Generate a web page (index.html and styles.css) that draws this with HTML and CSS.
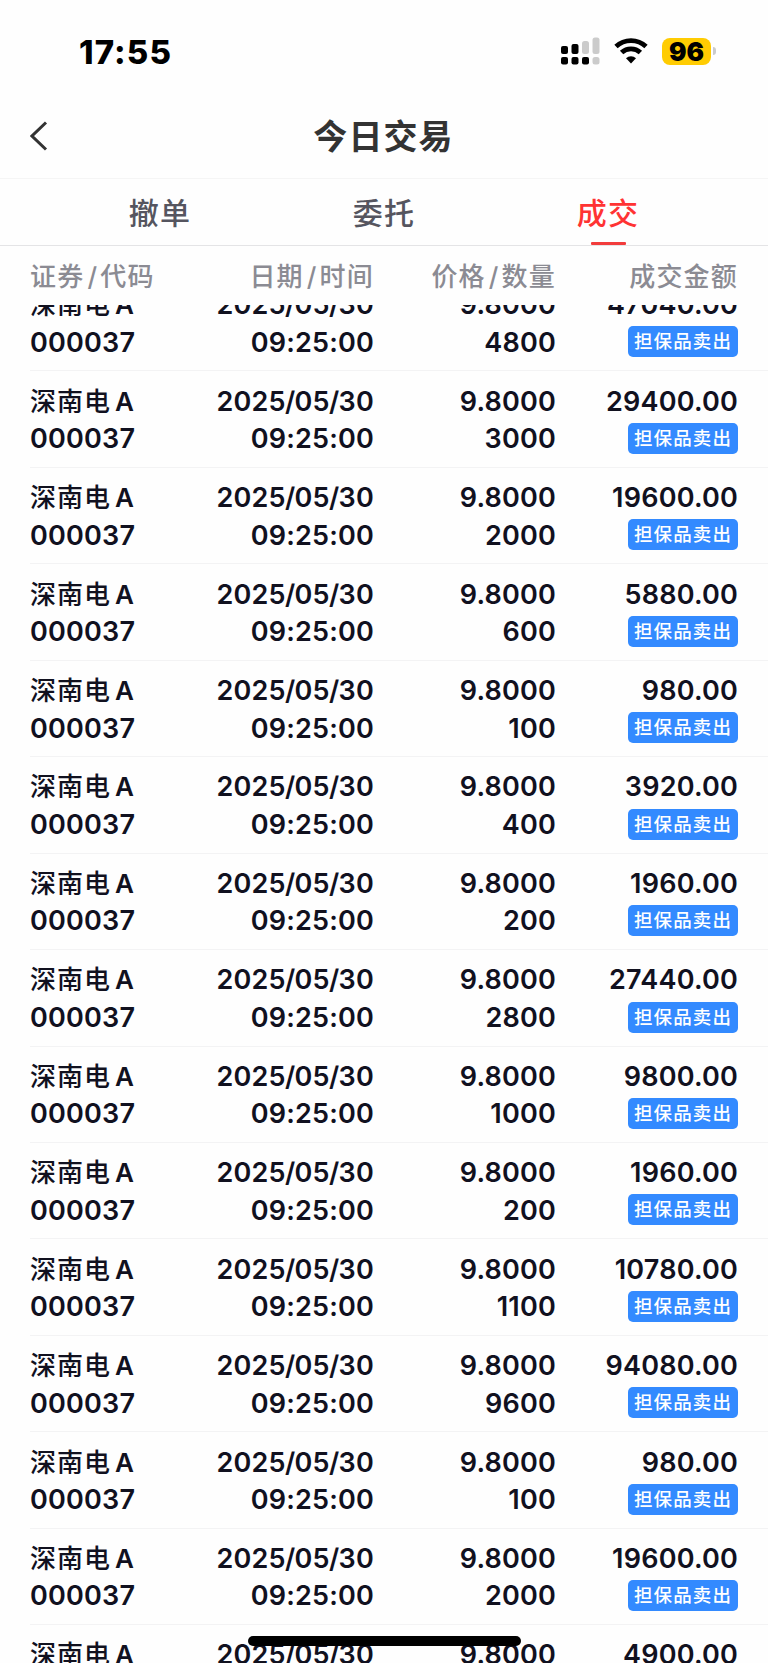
FILE: index.html
```html
<!DOCTYPE html>
<html lang="zh-CN">
    <head>
        <meta charset="UTF-8">
        <title>今日交易</title>
        <link rel="stylesheet" href="styles.css">
    </head>
    <body>
        <div class="page">
            <div class="status">
                <span class="time">17:55</span>
                <div class="status-icons">
                    <svg class="signal" width="39" height="28" viewBox="0 0 39 28">
                        <rect x="0" y="9" width="7" height="8" rx="2"/>
                        <rect x="10.5" y="7" width="7" height="10" rx="2"/>
                        <rect class="off" x="21" y="4" width="7" height="13" rx="2.5"/>
                        <rect class="off" x="31.5" y="0.5" width="7" height="16.5" rx="2.5"/>
                        <rect x="0" y="20" width="7" height="7.5" rx="2"/>
                        <rect x="10.5" y="20" width="7" height="7.5" rx="2"/>
                        <rect x="21" y="20" width="7" height="7.5" rx="2"/>
                        <rect class="off" x="31.5" y="20" width="7" height="7.5" rx="2.5"/>
                    </svg>
                    <svg class="wifi" width="34" height="26" viewBox="0 0 34 26">
                        <path class="arc" d="M2 8.6a21.8 21.8 0 0 1 30 0"/>
                        <path class="arc" d="M7.6 14.6a13.6 13.6 0 0 1 18.8 0"/>
                        <path d="M17 25.4l-5-5.1a7.4 7.4 0 0 1 10 0z"/>
                    </svg>
                    <div class="battery">96</div>
                    <div class="battery-cap"></div>
                </div>
            </div>
            <div class="header">
                <svg class="back" width="18" height="30" viewBox="0 0 18 30">
                    <path d="M16 1.5L2 15l14 13.5"/>
                </svg>
                <h1 class="title">今日交易</h1>
            </div>
            <ul class="tab">
                <li>撤单</li>
                <li>委托</li>
                <li class="selected">成交</li>
            </ul>
            <div class="cols thead">
                <span>证券<i>/</i>代码</span>
                <span>日期<i>/</i>时间</span>
                <span>价格<i>/</i>数量</span>
                <span>成交金额</span>
            </div>
            <div class="list">
                <div class="rows" id="rows"></div>
            </div>
            <div class="home-bar"></div>
        </div>
        <script>
            var aData = [
                ['4800', '47040.00'],
                ['3000', '29400.00'],
                ['2000', '19600.00'],
                ['600', '5880.00'],
                ['100', '980.00'],
                ['400', '3920.00'],
                ['200', '1960.00'],
                ['2800', '27440.00'],
                ['1000', '9800.00'],
                ['200', '1960.00'],
                ['1100', '10780.00'],
                ['9600', '94080.00'],
                ['100', '980.00'],
                ['2000', '19600.00'],
                ['500', '4900.00']
            ];
            var html = '';
            for(var i=0;i<aData.length;i++){
                html += '<div class="cols row">' +
                    '<div><p class="name">深南电<span class="share">A</span></p><p>000037</p></div>' +
                    '<div><p>2025<i>/</i>05<i>/</i>30</p><p>09:25:00</p></div>' +
                    '<div><p>9.8000</p><p>' + aData[i][0] + '</p></div>' +
                    '<div><p>' + aData[i][1] + '</p><p class="tag-line"><span class="tag">担保品卖出</span></p></div>' +
                    '</div>';
            }
            document.getElementById('rows').innerHTML = html;
        </script>
    </body>
</html>
```
FILE: styles.css
```css
*{
    margin: 0;
    padding: 0;
    box-sizing: border-box;
}
ul{
    list-style: none;
}
i{
    font-style: normal;
}
body{
    background: #fefefe;
    color: #11111f;
    font-family: Inter, "Noto Sans CJK SC", sans-serif;
}
.page{
    position: relative;
    height: 1663px;
    display: flex;
    flex-direction: column;
    overflow: hidden;
}
.status{
    height: 96px;
    flex: none;
    display: flex;
    justify-content: space-between;
    padding: 0 52px 0 79px;
    color: #000;
}
.time{
    font-size: 33px;
    font-weight: 800;
    letter-spacing: 1.1px;
    line-height: 40px;
    padding-top: 32px;
}
.status-icons{
    height: 28px;
    margin-top: 37px;
    display: flex;
    align-items: center;
}
.signal .off{
    fill: #cbcbcb;
}
.wifi{
    margin: 0 14px;
}
.wifi .arc{
    fill: none;
    stroke: #000;
    stroke-width: 4.8;
}
.battery{
    width: 49px;
    height: 27px;
    border-radius: 8px;
    background: #ffcc02;
    font-size: 26px;
    font-weight: 900;
    line-height: 27px;
    text-align: center;
}
.battery-cap{
    width: 3px;
    height: 8px;
    margin-left: 2px;
    border-radius: 0 4px 4px 0;
    background: #cbcbcb;
}
.header{
    height: 83px;
    flex: none;
    display: flex;
    align-items: center;
    padding: 0 30px 2px;
    border-bottom: 1px solid #f5f5f5;
}
.back{
    fill: none;
    stroke: #333;
    stroke-width: 3;
}
.title{
    flex: 1;
    padding: 0 19px 3px 0;
    color: #333;
    font-size: 34px;
    font-weight: 700;
    letter-spacing: 1.1px;
    text-align: center;
}
.tab{
    height: 67px;
    flex: none;
    display: flex;
    padding: 0 48px;
    border-bottom: 1px solid #e4e4e6;
    color: #55555f;
    font-size: 30px;
    font-weight: 500;
    letter-spacing: 1.2px;
    line-height: 69px;
    text-align: center;
}
.tab li{
    flex: 1;
    display: flex;
    flex-direction: column;
    align-items: center;
}
.tab .selected{
    color: #ff3333;
}
.tab .selected:after{
    content: "";
    width: 35px;
    height: 3px;
    margin-top: -6px;
    border-radius: 1px;
    background: #f23c3c;
}
.cols{
    display: grid;
    grid-template-columns: 150px 194px 182px 182px;
    text-align: right;
}
.cols > :first-child{
    text-align: left;
}
.thead{
    height: 59px;
    flex: none;
    padding-left: 30px;
    color: #8b8b93;
    font-size: 26px;
    font-weight: 500;
    letter-spacing: 1.2px;
    line-height: 61px;
}
.thead i{
    margin: 0 2px 0 3px;
}
.list{
    flex: 1;
    min-height: 0;
    overflow: hidden;
}
/* scrolled a little way down */
.rows{
    margin-top: -30px;
}
.row{
    height: 96.45px;
    margin-left: 30px;
    padding-top: 11.3px;
    border-bottom: 1px solid #f3f3f4;
    font-size: 27px;
    font-weight: 600;
    letter-spacing: 0.2px;
    line-height: 37.5px;
}
.row p{
    height: 37.5px;
}
.row i{
    margin: 0 -0.8px;
}
.row .name{
    font-size: 26px;
    font-weight: 500;
    letter-spacing: 1px;
}
.share{
    margin-left: 4px;
    font-weight: 600;
}
.tag-line{
    display: flex;
    justify-content: flex-end;
    align-items: flex-start;
    padding-top: 2.7px;
}
.tag{
    width: 110px;
    height: 31px;
    border-radius: 5px;
    background: #338aff;
    color: #fff;
    font-size: 18.5px;
    font-weight: 500;
    letter-spacing: 1.1px;
    line-height: 31px;
    text-align: center;
}
.home-bar{
    position: absolute;
    left: 248px;
    bottom: 17px;
    width: 273px;
    height: 10px;
    border-radius: 5px;
    background: #000;
}
```
